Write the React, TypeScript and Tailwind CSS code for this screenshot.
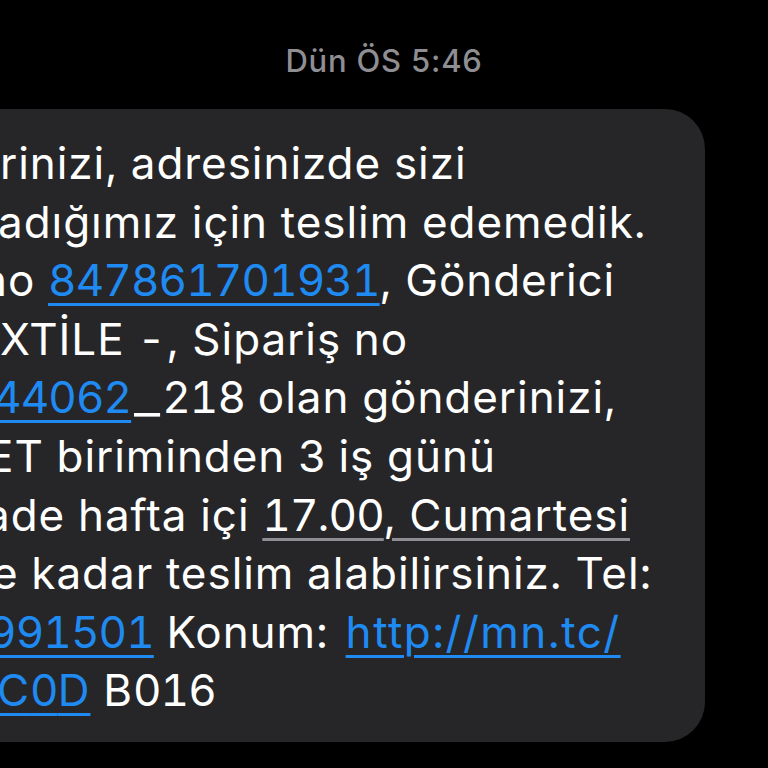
import React from "react";

const link = "text-[#1f8bf2] underline decoration-[#1f8bf2] decoration-[2.5px] underline-offset-[7px]";
const grayLine = "underline decoration-[#8e8e93] decoration-[2.5px] underline-offset-[7px]";

function N({ children }: { children: React.ReactNode }) {
  return <span className="tracking-[-0.9px]">{children}</span>;
}

export default function App() {
  return (
    <div className="w-[768px] h-[768px] bg-black overflow-hidden flex flex-col font-['Inter','Noto_Sans',sans-serif]">
      <div className="pt-[43px] h-[80px] text-center text-[31px] leading-[36px] tracking-[0.8px] text-[#8e8e93] font-medium">
        Dün ÖS 5:46
      </div>
      <div className="mt-[29px] ml-[-300px] mr-[63px] bg-[#262628] rounded-[40px] pt-[25px] pb-[22px] pl-[300px] text-white text-[44px] leading-[58.6px] tracking-[0.95px] tabular-nums overflow-hidden">
        <div className="whitespace-nowrap ml-[0px]">rinizi, adresinizde sizi</div>
        <div className="whitespace-nowrap ml-[-2px]">adığımız için teslim edemedik.</div>
        <div className="whitespace-nowrap ml-[-19px]">
          no <span className={link}><N>847861701931</N></span>, Gönderici
        </div>
        <div className="whitespace-nowrap ml-[0px]">XTİLE -, Sipariş no</div>
        <div className="whitespace-nowrap ml-[-7px]">
          <span className={link}><N>44062</N></span>
          <span className="inline-block w-[31px] text-center tracking-normal"><span className="inline-block scale-x-[1.3]">_</span></span>
          <N>218</N> olan gönderinizi,
        </div>
        <div className="whitespace-nowrap ml-[-13px]">ET biriminden <N>3</N> iş günü</div>
        <div className="whitespace-nowrap ml-[-15px]">
          ade hafta içi <span className={grayLine}><N>17.00</N>, Cumartesi</span>
        </div>
        <div className="whitespace-nowrap ml-[-8px]">e kadar teslim alabilirsiniz. Tel:</div>
        <div className="whitespace-nowrap ml-[-12px]">
          <span className={link}><N>991501</N></span> Konum: <span className={`${link} ml-[4px] tracking-[1.5px]`}>http://mn.tc/</span>
        </div>
        <div className="whitespace-nowrap ml-[-3px]">
          <span className={link}>C<N>0</N>D</span> B<N>016</N>
        </div>
      </div>
    </div>
  );
}
